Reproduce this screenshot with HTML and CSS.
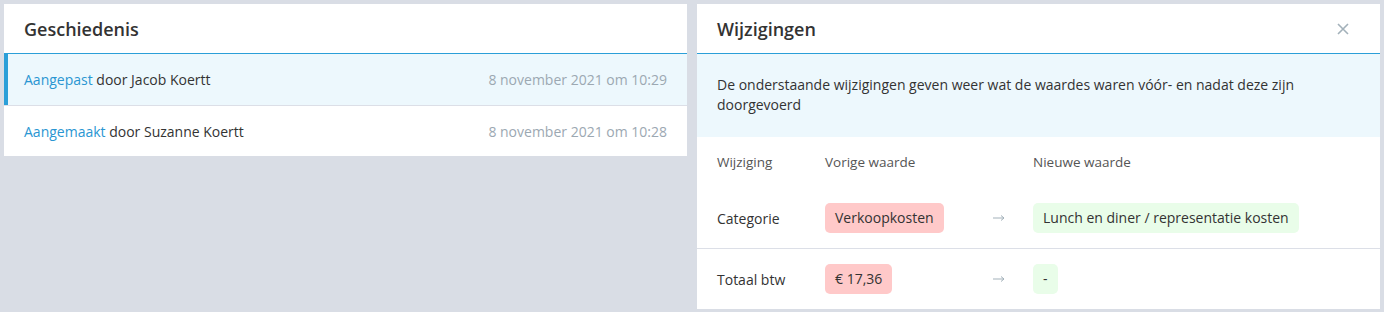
FILE: index.html
```html
<!DOCTYPE html>
<html lang="nl">
<head>
    <meta charset="UTF-8">
    <meta name="viewport" content="width=device-width, initial-scale=1.0">
    <title>Geschiedenis</title>
    <link rel="stylesheet" href="styles.css">
</head>
<body>
    <div class="panel history">
        <div class="panel-header">
            <h2>Geschiedenis</h2>
        </div>
        <div class="history-row active">
            <span><a class="action">Aangepast</a> door Jacob Koertt</span>
            <span class="date">8 november 2021 om 10:29</span>
        </div>
        <div class="history-row">
            <span><a class="action">Aangemaakt</a> door Suzanne Koertt</span>
            <span class="date">8 november 2021 om 10:28</span>
        </div>
    </div>

    <div class="panel changes">
        <div class="panel-header">
            <h2>Wijzigingen</h2>
            <button class="close-button" aria-label="Sluiten">
                <svg width="12" height="12" viewBox="0 0 12 12">
                    <path d="M1 1 L11 11 M11 1 L1 11" stroke="currentColor" stroke-width="1.6" fill="none"/>
                </svg>
            </button>
        </div>
        <div class="info">
            De onderstaande wijzigingen geven weer wat de waardes waren vóór- en nadat deze zijn doorgevoerd
        </div>
        <div class="change-row head">
            <span>Wijziging</span>
            <span>Vorige waarde</span>
            <span></span>
            <span>Nieuwe waarde</span>
        </div>
        <div class="change-row">
            <span>Categorie</span>
            <span><span class="pill old">Verkoopkosten</span></span>
            <span class="arrow"><svg width="12" height="8" viewBox="0 0 12 8"><path d="M0 4 H11 M8 1.5 L11 4 L8 6.5" stroke="currentColor" stroke-width="1" fill="none"/></svg></span>
            <span><span class="pill new">Lunch en diner / representatie kosten</span></span>
        </div>
        <div class="change-row">
            <span>Totaal btw</span>
            <span><span class="pill old">€ 17,36</span></span>
            <span class="arrow"><svg width="12" height="8" viewBox="0 0 12 8"><path d="M0 4 H11 M8 1.5 L11 4 L8 6.5" stroke="currentColor" stroke-width="1" fill="none"/></svg></span>
            <span><span class="pill new">-</span></span>
        </div>
    </div>
</body>
</html>
```

FILE: styles.css
```css
body {
    font-family: "Open Sans", "Liberation Sans", sans-serif;
    font-size: 14px;
    color: #333;
    margin: 0;
    padding: 4px;
    height: 312px;
    box-sizing: border-box;
    background-color: #d9dde5;
    display: flex;
    align-items: flex-start;
    gap: 10px;
}
.panel {
    flex: 1;
    background-color: #ffffff;
}
.panel-header {
    height: 49px;
    border-bottom: 1px solid #2b9fd8;
    display: flex;
    align-items: center;
    justify-content: space-between;
    padding: 0 20px;
}
.panel-header h2 {
    margin: 0;
    font-size: 18px;
    font-weight: 600;
    color: #333;
}
.close-button {
    background: none;
    border: none;
    padding: 0;
    margin-right: 11px;
    color: #a3b1ba;
    cursor: pointer;
    display: flex;
}

/* Geschiedenis */
.history-row {
    height: 50px;
    display: flex;
    align-items: center;
    justify-content: space-between;
    padding: 0 20px;
    border-top: 1px solid #dcdfe7;
}
.panel-header + .history-row {
    border-top: none;
    height: 51px;
}
.history-row.active {
    background-color: #edf8fd;
    border-left: 4px solid #2b9fd8;
    padding-left: 16px;
}
.action {
    color: #2a96d2;
    cursor: pointer;
}
.date {
    color: #9ca8b2;
}

/* Wijzigingen */
.info {
    background-color: #edf8fd;
    padding: 21px 20px 22px;
    line-height: 20px;
}
.change-row {
    display: grid;
    grid-template-columns: 108px 168px 40px 1fr;
    align-items: center;
    height: 60px;
    padding: 0 20px;
    border-top: 1px solid #dcdfe7;
}
.change-row.head {
    height: 49px;
    padding-bottom: 2px;
    border-top: none;
    color: #555;
    font-size: 13.5px;
}
.change-row.head + .change-row {
    border-top: none;
}
.arrow {
    color: #a3b1ba;
    display: flex;
    align-items: center;
}
.pill {
    display: inline-block;
    line-height: 30px;
    padding: 0 10px;
    border-radius: 5px;
}
.pill.old {
    background-color: #ffc9c9;
}
.pill.new {
    background-color: #e9fde9;
}
```
